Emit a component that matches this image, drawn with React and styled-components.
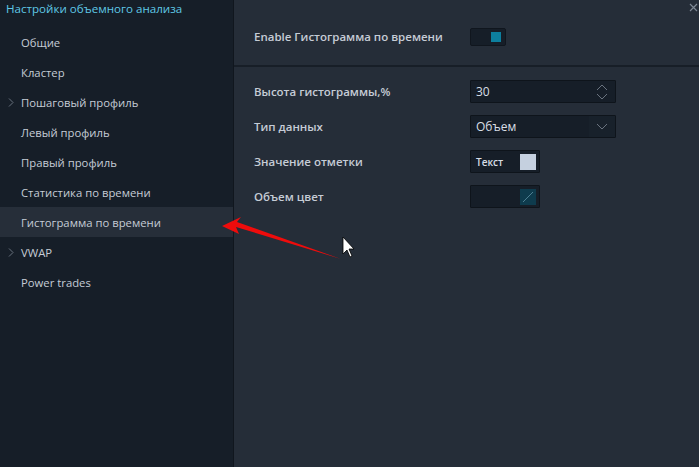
import React from 'react';
import styled, { createGlobalStyle } from 'styled-components';

const GlobalStyle = createGlobalStyle`
  html, body {
    margin: 0;
    padding: 0;
    background: #252d38;
    overflow: hidden;
  }
  * { box-sizing: border-box; }
`;

const Window = styled.div`
  position: relative;
  width: 699px;
  height: 467px;
  display: flex;
  font-family: "Open Sans", "Noto Sans", sans-serif;
  font-size: 12px;
  color: #c5ccd6;
  background: #252d38;
`;

const Sidebar = styled.div`
  width: 234px;
  flex-shrink: 0;
  background: #161e28;
  border-right: 1px solid #10161e;
  display: flex;
  flex-direction: column;
`;

const Title = styled.div`
  color: #5fc8e6;
  font-size: 11.6px;
  padding: 0 6px;
  height: 18px;
  line-height: 17px;
  margin-bottom: 9px;
`;

const NavItem = styled.div`
  height: 30px;
  display: flex;
  align-items: center;
  padding-left: 21px;
  position: relative;
  font-size: 11.3px;
  color: #c5ccd6;
  background: ${p => (p.active ? '#262e39' : 'transparent')};
`;

const Chevron = styled.svg`
  position: absolute;
  left: 8px;
  top: 11px;
`;

const Main = styled.div`
  flex: 1;
  display: flex;
  flex-direction: column;
`;

const TopBar = styled.div`
  height: 67px;
  border-bottom: 2px solid #171e27;
  display: flex;
  align-items: center;
  padding: 8px 0 0 20px;
  position: relative;
`;

const Label = styled.div`
  width: 216px;
  color: #c5ccd6;
  font-weight: 600;
  font-size: 11.5px;
`;

const Toggle = styled.div`
  width: 36px;
  height: 18px;
  background: #161e28;
  border: 1px solid #10161e;
  border-radius: 2px;
  display: flex;
  align-items: center;
  justify-content: flex-end;
  padding-right: 4px;
`;

const Knob = styled.div`
  width: 10px;
  height: 10px;
  background: #0d7f9e;
`;

const Close = styled.svg`
  position: absolute;
  right: 1px;
  top: 3px;
`;

const Form = styled.div`
  display: flex;
  flex-direction: column;
  gap: 12px;
  padding: 13px 0 0 20px;
`;

const Row = styled.div`
  display: flex;
  align-items: center;
  height: 23px;
`;

const Field = styled.div`
  width: ${p => p.w}px;
  height: 23px;
  background: #161e28;
  border: 1px solid #0e141b;
  border-radius: 1px;
  display: flex;
  align-items: center;
  justify-content: space-between;
  padding-left: 5px;
  color: #d8dee6;
  font-size: 12px;
`;

const Arrows = styled.div`
  width: 26px;
  height: 100%;
  display: flex;
  align-items: center;
  justify-content: center;
`;

const SelectArrow = styled.div`
  width: 26px;
  height: 100%;
  display: flex;
  align-items: center;
  justify-content: center;
  background: #18212b;
`;

const SmallText = styled.span`
  font-size: 10px;
  font-weight: 600;
  color: #d8dee6;
`;

const Swatch = styled.div`
  width: 16px;
  height: 16px;
  margin-right: 3px;
  background: ${p => p.color};
  display: flex;
  align-items: center;
  justify-content: center;
`;

const Overlay = styled.svg`
  position: absolute;
  left: 0;
  top: 0;
  pointer-events: none;
`;

const items = [
  { name: 'Общие' },
  { name: 'Кластер' },
  { name: 'Пошаговый профиль', sub: true },
  { name: 'Левый профиль' },
  { name: 'Правый профиль' },
  { name: 'Статистика по времени' },
  { name: 'Гистограмма по времени', active: true },
  { name: 'VWAP', sub: true },
  { name: 'Power trades' },
];

const ChevronIcon = () => (
  <Chevron width="6" height="9" viewBox="0 0 6 9">
    <path d="M1 0.5 L5 4.5 L1 8.5" stroke="#69727e" strokeWidth="1" fill="none" />
  </Chevron>
);

const App = () => (
  <>
    <GlobalStyle />
    <Window>
      <Sidebar>
        <Title>Настройки объемного анализа</Title>
        {items.map(item => (
          <NavItem key={item.name} active={item.active}>
            {item.sub && <ChevronIcon />}
            {item.name}
          </NavItem>
        ))}
      </Sidebar>
      <Main>
        <TopBar>
          <Label>Enable Гистограмма по времени</Label>
          <Toggle>
            <Knob />
          </Toggle>
          <Close width="9" height="9" viewBox="0 0 9 9">
            <path d="M1 1 L8 8 M8 1 L1 8" stroke="#7d8794" strokeWidth="1.2" />
          </Close>
        </TopBar>
        <Form>
          <Row>
            <Label>Высота гистограммы,%</Label>
            <Field w={146}>
              30
              <Arrows>
                <svg width="12" height="18" viewBox="0 0 12 18">
                  <path d="M1 7 L6 2 L11 7 M1 11 L6 16 L11 11" stroke="#6a737f" strokeWidth="1" fill="none" />
                </svg>
              </Arrows>
            </Field>
          </Row>
          <Row>
            <Label>Тип данных</Label>
            <Field w={146}>
              Объем
              <SelectArrow>
                <svg width="12" height="8" viewBox="0 0 12 8">
                  <path d="M1 1 L6 6 L11 1" stroke="#6a737f" strokeWidth="1" fill="none" />
                </svg>
              </SelectArrow>
            </Field>
          </Row>
          <Row>
            <Label>Значение отметки</Label>
            <Field w={70}>
              <SmallText>Текст</SmallText>
              <Swatch color="#c5d0df" />
            </Field>
          </Row>
          <Row>
            <Label>Объем цвет</Label>
            <Field w={70}>
              <span />
              <Swatch color="#0e3b4d">
                <svg width="16" height="16" viewBox="0 0 16 16">
                  <path d="M3 13 L13 3" stroke="#4d7f92" strokeWidth="1" />
                </svg>
              </Swatch>
            </Field>
          </Row>
        </Form>
      </Main>
      <Overlay width="699" height="467" viewBox="0 0 699 467">
        <path d="M222 226 L241 217 L237 222 L341 259 L236 227 L239 234 Z" fill="#ee0c0c" />
        <path d="M343 237 L343 254 L347 250 L350 257 L352 256 L349 249 L354 249 Z" fill="#ffffff" stroke="#000" strokeWidth="0.8" />
      </Overlay>
    </Window>
  </>
);

export default App;
